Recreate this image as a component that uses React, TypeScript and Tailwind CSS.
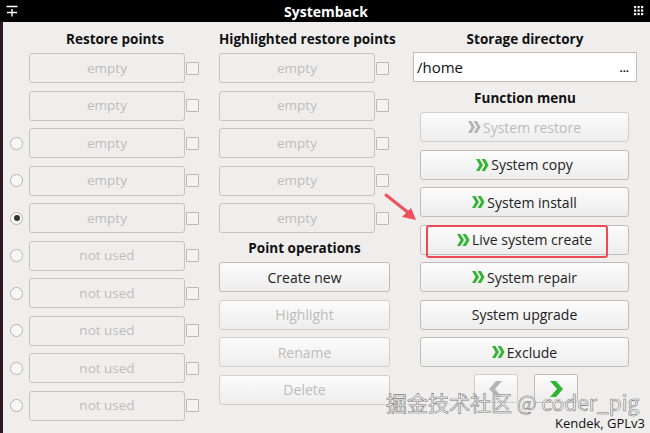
import React from "react";

const FONT = "font-['Open_Sans','DejaVu_Sans',sans-serif]";

function Chevrons({ gray = false }: { gray?: boolean }) {
  const c = gray ? "#b4b4b4" : "#33b533";
  return (
    <svg width="13" height="12" viewBox="0 0 13 12" className="mr-[2px]">
      <path d="M0 0 L3.4 0 L7 6 L3.4 12 L0 12 L3.6 6 Z" fill={c} />
      <path d="M5.6 0 L9 0 L12.6 6 L9 12 L5.6 12 L9.2 6 Z" fill={c} />
    </svg>
  );
}

function Box({ label }: { label: string }) {
  return (
    <div className="h-[30px] w-[156px] rounded-[3px] border border-[#c4c4c4] flex items-center justify-center text-[13.5px] text-[#bdbdbd]">
      {label}
    </div>
  );
}

function Check() {
  return <div className="w-[13px] h-[13px] border border-[#b9b9b9] rounded-[1px] bg-[#f3f3f3]" />;
}

function Radio({ on }: { on?: boolean }) {
  return (
    <div className="w-[13px] h-[13px] rounded-full border border-[#b3b3b3] bg-[#f8f8f8] flex items-center justify-center">
      {on && <div className="w-[6px] h-[6px] rounded-full bg-[#333]" />}
    </div>
  );
}

function Btn({
  label,
  disabled,
  icon,
  w,
}: {
  label: string;
  disabled?: boolean;
  icon?: boolean;
  w: string;
}) {
  return (
    <div
      className={`${w} h-[30px] rounded-[3px] border ${
        disabled ? "border-[#cfcfcf] text-[#bcbcbc]" : "border-[#bdbdbd] text-[#222]"
      } bg-gradient-to-b from-[#fcfcfc] to-[#ededed] flex items-center justify-center text-[14px]`}
    >
      {icon && <Chevrons gray={disabled} />}
      {label}
    </div>
  );
}

export default function App() {
  const left = [
    "empty",
    "empty",
    "empty",
    "empty",
    "empty",
    "not used",
    "not used",
    "not used",
    "not used",
    "not used",
  ];
  return (
    <div className={`relative w-[650px] h-[433px] overflow-hidden bg-[#efeeed] ${FONT}`}>
      {/* title bar */}
      <div className="h-[22px] bg-black flex items-center justify-between px-[6px] text-white">
        <svg width="12" height="12" viewBox="0 0 12 12">
          <path d="M0.5 1.5 H11.5 M6 4 V11.5 M1 7.5 H11" stroke="#fff" strokeWidth="1.4" />
        </svg>
        <span className="text-[14px] font-bold">Systemback</span>
        <svg width="10" height="10" viewBox="0 0 10 10">
          {[0, 1, 2].map((r) =>
            [0, 1, 2].map((c) => (
              <rect key={`${r}${c}`} x={c * 3.5} y={r * 3.5} width="2.2" height="2.2" fill="#fff" />
            ))
          )}
        </svg>
      </div>

      <div className="flex h-[411px] border-l-[3px] border-[#2d1624]">
        {/* left column */}
        <div className="w-[197px] flex flex-col">
          <div className="h-[31px] pt-[7px] pl-[27px] text-center text-[13.5px] font-bold text-[#111] w-[197px]">
            Restore points
          </div>
          <div className="flex flex-col gap-[7.5px]">
            {left.map((l, i) => (
              <div key={i} className="flex items-center h-[30px]">
                <div className="w-[26px] flex justify-center pl-[1px]">
                  {i >= 2 && <Radio on={i === 4} />}
                </div>
                <Box label={l} />
                <div className="ml-[1px]">
                  <Check />
                </div>
              </div>
            ))}
          </div>
        </div>

        {/* middle column */}
        <div className="w-[193px] flex flex-col pl-[19px]">
          <div className="h-[31px] pt-[7px] w-[171px] text-center text-[13.5px] font-bold text-[#111] whitespace-nowrap">
            Highlighted restore points
          </div>
          <div className="flex flex-col gap-[7.5px]">
            {[0, 1, 2, 3, 4].map((i) => (
              <div key={i} className="flex items-center h-[30px]">
                <Box label="empty" />
                <div className="ml-[1px]">
                  <Check />
                </div>
              </div>
            ))}
          </div>
          <div className="h-[29px] pt-[1px] flex items-center justify-center w-[171px] text-[13.5px] font-bold text-[#111]">
            Point operations
          </div>
          <div className="flex flex-col gap-[7.5px]">
            <Btn w="w-[171px]" label="Create new" />
            <Btn w="w-[171px]" label="Highlight" disabled />
            <Btn w="w-[171px]" label="Rename" disabled />
            <Btn w="w-[171px]" label="Delete" disabled />
          </div>
        </div>

        {/* right column */}
        <div className="flex-1 flex flex-col pl-[20px]">
          <div className="h-[30px] pt-[7px] w-[224px] text-center text-[13.5px] font-bold text-[#111]">
            Storage directory
          </div>
          <div className="w-[224px] h-[30px] bg-white border border-[#bdbdbd] flex items-center justify-between pl-[3px] pr-[7px] text-[15px] text-[#111]">
            <span>/home</span>
            <span className="text-[11px] font-bold leading-none">...</span>
          </div>
          <div className="h-[30px] pt-[3px] w-[224px] flex items-center justify-center text-[13.5px] font-bold text-[#111]">
            Function menu
          </div>
          <div className="flex flex-col gap-[7.5px] pl-[7px]">
            <Btn w="w-[209px]" label="System restore" icon disabled />
            <Btn w="w-[209px]" label="System copy" icon />
            <Btn w="w-[209px]" label="System install" icon />
            <Btn w="w-[209px]" label="Live system create" icon />
            <Btn w="w-[209px]" label="System repair" icon />
            <Btn w="w-[209px]" label="System upgrade" />
            <Btn w="w-[209px]" label="Exclude" icon />
          </div>
          <div className="flex gap-[16px] pl-[61px] mt-[7px]">
            <div className="w-[44px] h-[29px] rounded-[3px] border border-[#cfcfcf] bg-gradient-to-b from-[#fcfcfc] to-[#ededed] flex items-center justify-center">
              <svg width="14" height="16" viewBox="0 0 14 16">
                <path d="M13 0 L7 0 L0 8 L7 16 L13 16 L6 8 Z" fill="#b5b5b5" />
              </svg>
            </div>
            <div className="w-[44px] h-[29px] rounded-[3px] border border-[#bdbdbd] bg-gradient-to-b from-[#fcfcfc] to-[#ededed] flex items-center justify-center">
              <svg width="14" height="16" viewBox="0 0 14 16">
                <path d="M1 0 L7 0 L14 8 L7 16 L1 16 L8 8 Z" fill="#2fb52f" />
              </svg>
            </div>
          </div>
          <div className="flex-1" />
          <div className="text-right pr-[5px] text-[13px] text-[#111] leading-none pb-[3px]">
            Kendek, GPLv3
          </div>
        </div>
      </div>

      {/* overlays: red highlight box and arrow */}
      <div className="absolute left-[426px] top-[225px] w-[182px] h-[33px] border-2 border-[#ec4a55] rounded-[3px]" />
      <svg className="absolute left-[380px] top-[190px]" width="45" height="40" viewBox="0 0 45 40">
        <path d="M6 5 L30 24" stroke="#f0505a" strokeWidth="3" strokeLinecap="round" />
        <path d="M36 30 L22 27 L31 18 Z" fill="#f0505a" />
      </svg>

      {/* watermark */}
      <div className="absolute left-[386px] top-[392px] text-[21px] leading-none text-[#f6f6f6] whitespace-nowrap font-['Noto_Sans_CJK_SC','DejaVu_Sans',sans-serif] [-webkit-text-stroke:0.6px_#7a7a7a]">
        掘金技术社区 @ coder_pig
      </div>
    </div>
  );
}
